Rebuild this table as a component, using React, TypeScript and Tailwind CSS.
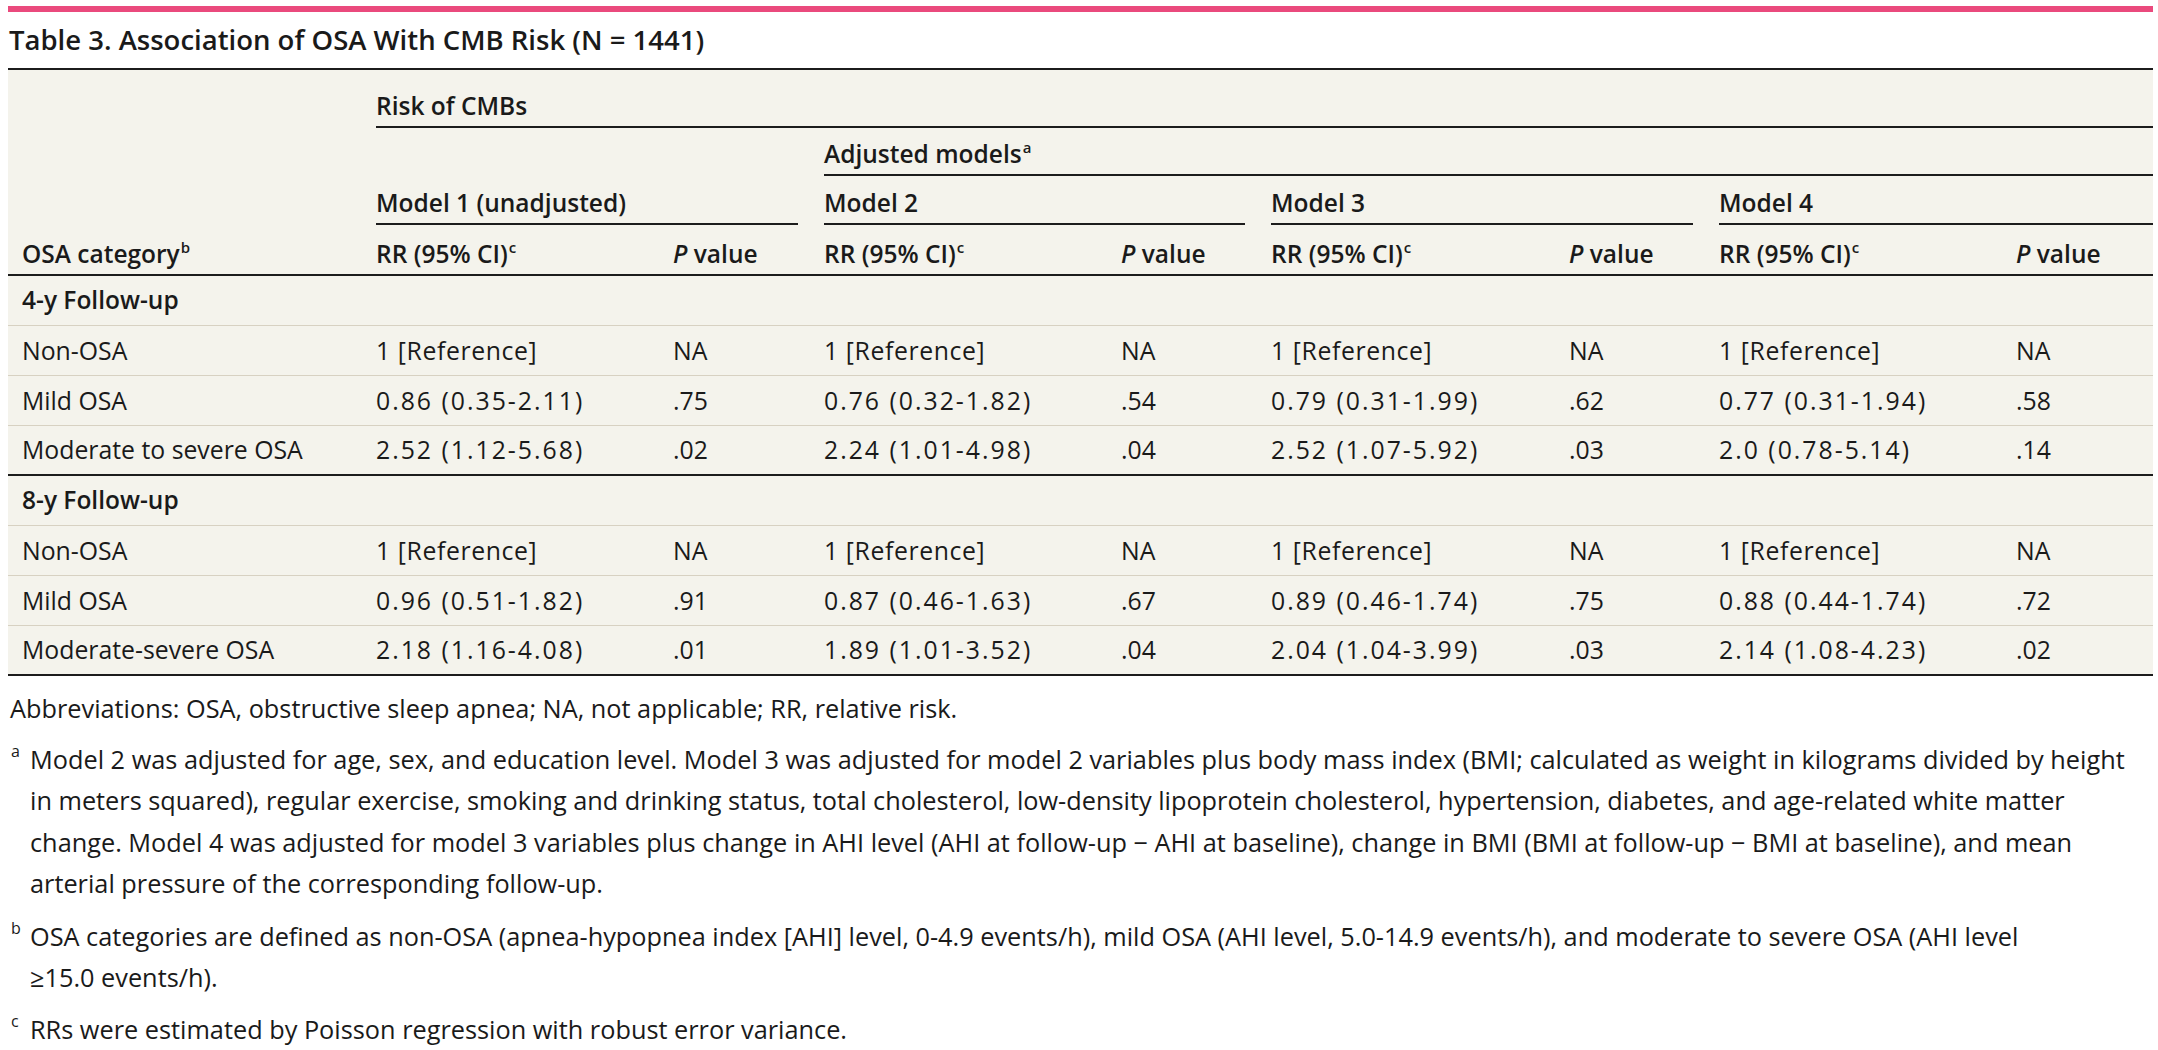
import React from "react";

const COLS =
  "grid grid-cols-[368px_297px_151px_297px_150px_298px_150px_297px_137px]";

type Row = { label: string; cells: [string, string][]; last?: boolean };

const ref: [string, string][] = [
  ["1 [Reference]", "NA"],
  ["1 [Reference]", "NA"],
  ["1 [Reference]", "NA"],
  ["1 [Reference]", "NA"],
];

const sections: { title: string; rows: Row[] }[] = [
  {
    title: "4-y Follow-up",
    rows: [
      { label: "Non-OSA", cells: ref },
      {
        label: "Mild OSA",
        cells: [
          ["0.86 (0.35-2.11)", ".75"],
          ["0.76 (0.32-1.82)", ".54"],
          ["0.79 (0.31-1.99)", ".62"],
          ["0.77 (0.31-1.94)", ".58"],
        ],
      },
      {
        label: "Moderate to severe OSA",
        cells: [
          ["2.52 (1.12-5.68)", ".02"],
          ["2.24 (1.01-4.98)", ".04"],
          ["2.52 (1.07-5.92)", ".03"],
          ["2.0 (0.78-5.14)", ".14"],
        ],
        last: true,
      },
    ],
  },
  {
    title: "8-y Follow-up",
    rows: [
      { label: "Non-OSA", cells: ref },
      {
        label: "Mild OSA",
        cells: [
          ["0.96 (0.51-1.82)", ".91"],
          ["0.87 (0.46-1.63)", ".67"],
          ["0.89 (0.46-1.74)", ".75"],
          ["0.88 (0.44-1.74)", ".72"],
        ],
      },
      {
        label: "Moderate-severe OSA",
        cells: [
          ["2.18 (1.16-4.08)", ".01"],
          ["1.89 (1.01-3.52)", ".04"],
          ["2.04 (1.04-3.99)", ".03"],
          ["2.14 (1.08-4.23)", ".02"],
        ],
        last: true,
      },
    ],
  },
];

function Sup({ children }: { children: React.ReactNode }) {
  return <sup className="text-[15px] top-[-10px] ml-[1px]">{children}</sup>;
}

function PVal() {
  return (
    <>
      <i>P</i> value
    </>
  );
}

const noteA = [
  "Model 2 was adjusted for age, sex, and education level. Model 3 was adjusted for model 2 variables plus body mass index (BMI; calculated as weight in kilograms divided by height",
  "in meters squared), regular exercise, smoking and drinking status, total cholesterol, low-density lipoprotein cholesterol, hypertension, diabetes, and age-related white matter",
  "change. Model 4 was adjusted for model 3 variables plus change in AHI level (AHI at follow-up \u2212 AHI at baseline), change in BMI (BMI at follow-up \u2212 BMI at baseline), and mean",
  "arterial pressure of the corresponding follow-up.",
];
const noteB = [
  "OSA categories are defined as non-OSA (apnea-hypopnea index [AHI] level, 0-4.9 events/h), mild OSA (AHI level, 5.0-14.9 events/h), and moderate to severe OSA (AHI level",
  "\u226515.0 events/h).",
];
const noteC = ["RRs were estimated by Poisson regression with robust error variance."];

function Note({ letter, lines, mt }: { letter: string; lines: string[]; mt: string }) {
  return (
    <div className={`flex ${mt}`}>
      <span className="w-[22px] shrink-0 pl-[3px] text-[16px] leading-[41.5px] relative top-[-8px]">
        {letter}
      </span>
      <div>
        {lines.map((l, i) => (
          <div key={i} className="whitespace-nowrap leading-[41.5px]">
            {l}
          </div>
        ))}
      </div>
    </div>
  );
}

export default function App() {
  const hdr = "flex items-end pb-[5px] leading-[30px] font-semibold text-[24.5px]";
  return (
    <div className="w-[2158px] min-h-screen bg-white text-[#1a1a1a] font-['Open_Sans',sans-serif]">
      <div className="pl-[8px] pr-[5px] pt-[6px]">
        <div className="h-[6px] bg-[#ea4a7d]" />
        <div className="mt-[10px] text-[27.5px] leading-[36px] font-semibold pl-[1px]">
          Table 3. Association of OSA With CMB Risk (N = 1441)
        </div>

        <div className="mt-[10px] bg-[#f4f3ec] text-[24.8px]">
          {/* header */}
          <div className={`${COLS} border-t-2 border-[#1c1c1c]`}>
            <div className={`col-start-1 row-start-1 row-span-4 border-b-2 border-[#1c1c1c] pl-[14px] ${hdr}`}>
              <span>
                OSA category<Sup>b</Sup>
              </span>
            </div>
            <div className={`col-start-2 col-span-8 row-start-1 h-[58px] border-b-2 border-[#1c1c1c] ${hdr}`}>
              Risk of CMBs
            </div>
            <div className={`col-start-4 col-span-6 row-start-2 h-[48px] border-b-2 border-[#1c1c1c] ${hdr}`}>
              <span>
                Adjusted models<Sup>a</Sup>
              </span>
            </div>
            <div className={`col-start-2 col-span-2 row-start-3 h-[49px] mr-[26px] border-b-2 border-[#1c1c1c] ${hdr}`}>
              Model 1 (unadjusted)
            </div>
            <div className={`col-start-4 col-span-2 row-start-3 h-[49px] mr-[26px] border-b-2 border-[#1c1c1c] ${hdr}`}>
              Model 2
            </div>
            <div className={`col-start-6 col-span-2 row-start-3 h-[49px] mr-[26px] border-b-2 border-[#1c1c1c] ${hdr}`}>
              Model 3
            </div>
            <div className={`col-start-8 col-span-2 row-start-3 h-[49px] border-b-2 border-[#1c1c1c] ${hdr}`}>
              Model 4
            </div>
            {[2, 4, 6, 8].map((c) => (
              <React.Fragment key={c}>
                <div className={`row-start-4 h-[51px] border-b-2 border-[#1c1c1c] ${hdr}`}>
                  <span>
                    RR (95% CI)<Sup>c</Sup>
                  </span>
                </div>
                <div className={`row-start-4 h-[51px] border-b-2 border-[#1c1c1c] ${hdr}`}>
                  <span>
                    <PVal />
                  </span>
                </div>
              </React.Fragment>
            ))}
          </div>

          {/* body */}
          {sections.map((s) => (
            <div key={s.title}>
              <div className="h-[50px] border-b border-[#d7d1c2] flex items-center pl-[14px] font-semibold text-[24.5px]">
                {s.title}
              </div>
              {s.rows.map((r) => (
                <div
                  key={r.label}
                  className={`${COLS} h-[50px] items-center ${
                    r.last ? "border-b-2 border-[#1c1c1c]" : "border-b border-[#d7d1c2]"
                  }`}
                >
                  <div className="pl-[14px] whitespace-nowrap">{r.label}</div>
                  {r.cells.map(([rr, p], i) => (
                    <React.Fragment key={i}>
                      <div
                        className={`whitespace-nowrap ${
                          rr.startsWith("1 [") ? "tracking-[0.6px]" : "tracking-[2px]"
                        }`}
                      >
                        {rr}
                      </div>
                      <div className="whitespace-nowrap">{p}</div>
                    </React.Fragment>
                  ))}
                </div>
              ))}
            </div>
          ))}
        </div>

        {/* footnotes */}
        <div className="text-[25.3px]">
          <div className="mt-[12px] leading-[41.5px] pl-[2px] whitespace-nowrap">
            Abbreviations: OSA, obstructive sleep apnea; NA, not applicable; RR, relative risk.
          </div>
          <Note letter="a" lines={noteA} mt="mt-[9px]" />
          <Note letter="b" lines={noteB} mt="mt-[11px]" />
          <Note letter="c" lines={noteC} mt="mt-[10px]" />
        </div>
      </div>
    </div>
  );
}
